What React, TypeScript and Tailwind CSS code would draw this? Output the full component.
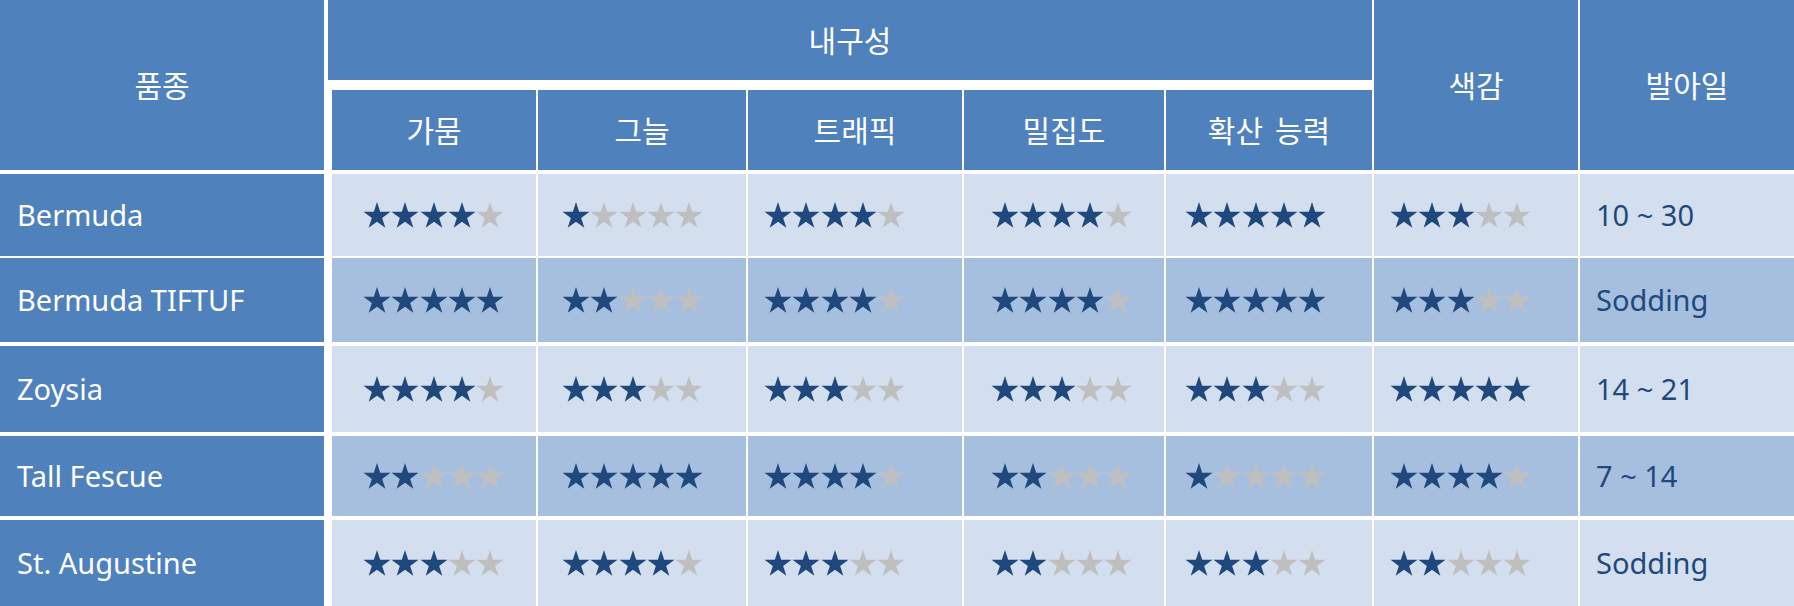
import React from 'react';

const HEAD = 'bg-[#4f81bd] text-white flex items-center justify-center';
const COLS = 'grid grid-cols-[330px_204px_208px_214px_200px_206px_204px_214px] gap-x-[2px]';

type Row = {
  name: string;
  stars: number[];
  days: string;
  h: string;
  mt: string;
  bg: string;
};

const rows: Row[] = [
  { name: 'Bermuda', stars: [4, 1, 4, 4, 5, 3], days: '10 ~ 30', h: 'h-[82px]', mt: 'mt-[4px]', bg: 'bg-[#d3dfee]' },
  { name: 'Bermuda TIFTUF', stars: [5, 2, 4, 4, 5, 3], days: 'Sodding', h: 'h-[84px]', mt: 'mt-[2px]', bg: 'bg-[#a7bfde]' },
  { name: 'Zoysia', stars: [4, 3, 3, 3, 3, 5], days: '14 ~ 21', h: 'h-[86px]', mt: 'mt-[4px]', bg: 'bg-[#d3dfee]' },
  { name: 'Tall Fescue', stars: [2, 5, 4, 2, 1, 4], days: '7 ~ 14', h: 'h-[80px]', mt: 'mt-[4px]', bg: 'bg-[#a7bfde]' },
  { name: 'St. Augustine', stars: [3, 4, 3, 2, 3, 2], days: 'Sodding', h: 'h-[86px]', mt: 'mt-[4px]', bg: 'bg-[#d3dfee]' },
];

const subHeads = ['가뭄', '그늘', '트래픽', '밀집도', '확산 능력'];
const subCols = ['col-start-2', 'col-start-3', 'col-start-4', 'col-start-5', 'col-start-6'];
// the star strips don't sit quite centred in the source, so each column has its own inset
const starPad = ['pl-[31px]', 'pl-[24px]', 'pl-[16px]', 'pl-[27px]', 'pl-[19px]', 'pl-[16px]'];

// five-point star, outer radius 14.2, inner 5.4
const starPoints = Array.from({ length: 10 }, (_, i) => {
  const r = i % 2 === 0 ? 14.2 : 5.43;
  const a = (Math.PI / 5) * i - Math.PI / 2;
  return `${(14 + r * Math.cos(a)).toFixed(2)},${(15.2 + r * Math.sin(a)).toFixed(2)}`;
}).join(' ');

const Stars: React.FC<{ n: number }> = ({ n }) => (
  <div className="flex">
    {[0, 1, 2, 3, 4].map((i) => (
      <svg key={i} width="28.3" height="28" viewBox="0 0 28.3 28">
        <polygon points={starPoints} fill={i < n ? '#1f497d' : '#bfbfbf'} />
      </svg>
    ))}
  </div>
);

export default function App() {
  return (
    <div className="w-[1794px] h-[606px] bg-white font-['Noto_Sans','Noto_Sans_CJK_KR',sans-serif] overflow-hidden">
      {/* header */}
      <div className={`${COLS} grid-rows-[80px_80px] gap-y-[10px] h-[170px]`}>
        <div className={`${HEAD} col-start-1 row-start-1 row-span-2 mr-[6px] text-[30px]`}>품종</div>
        <div className={`${HEAD} col-start-2 col-span-5 row-start-1 -ml-[4px] text-[30px]`}>내구성</div>
        <div className={`${HEAD} col-start-7 row-start-1 row-span-2 text-[30px]`}>색감</div>
        <div className={`${HEAD} col-start-8 row-start-1 row-span-2 text-[30px]`}>발아일</div>
        {subHeads.map((t, i) => (
          <div key={t} className={`${HEAD} ${subCols[i]} row-start-2 text-[30px] gap-x-[12px]`}>
            {t.split(' ').map((w) => (
              <span key={w}>{w}</span>
            ))}
          </div>
        ))}
      </div>

      {/* body */}
      {rows.map((r) => (
        <div key={r.name} className={`${COLS} ${r.h} ${r.mt}`}>
          <div className="bg-[#4f81bd] text-white mr-[6px] flex items-center pl-[17px] text-[29px]">
            {r.name}
          </div>
          {r.stars.map((n, i) => (
            <div key={i} className={`${r.bg} flex items-center ${starPad[i]}`}>
              <Stars n={n} />
            </div>
          ))}
          <div className={`${r.bg} flex items-center pl-[16px] text-[29px] text-[#1f497d]`}>{r.days}</div>
        </div>
      ))}
    </div>
  );
}
